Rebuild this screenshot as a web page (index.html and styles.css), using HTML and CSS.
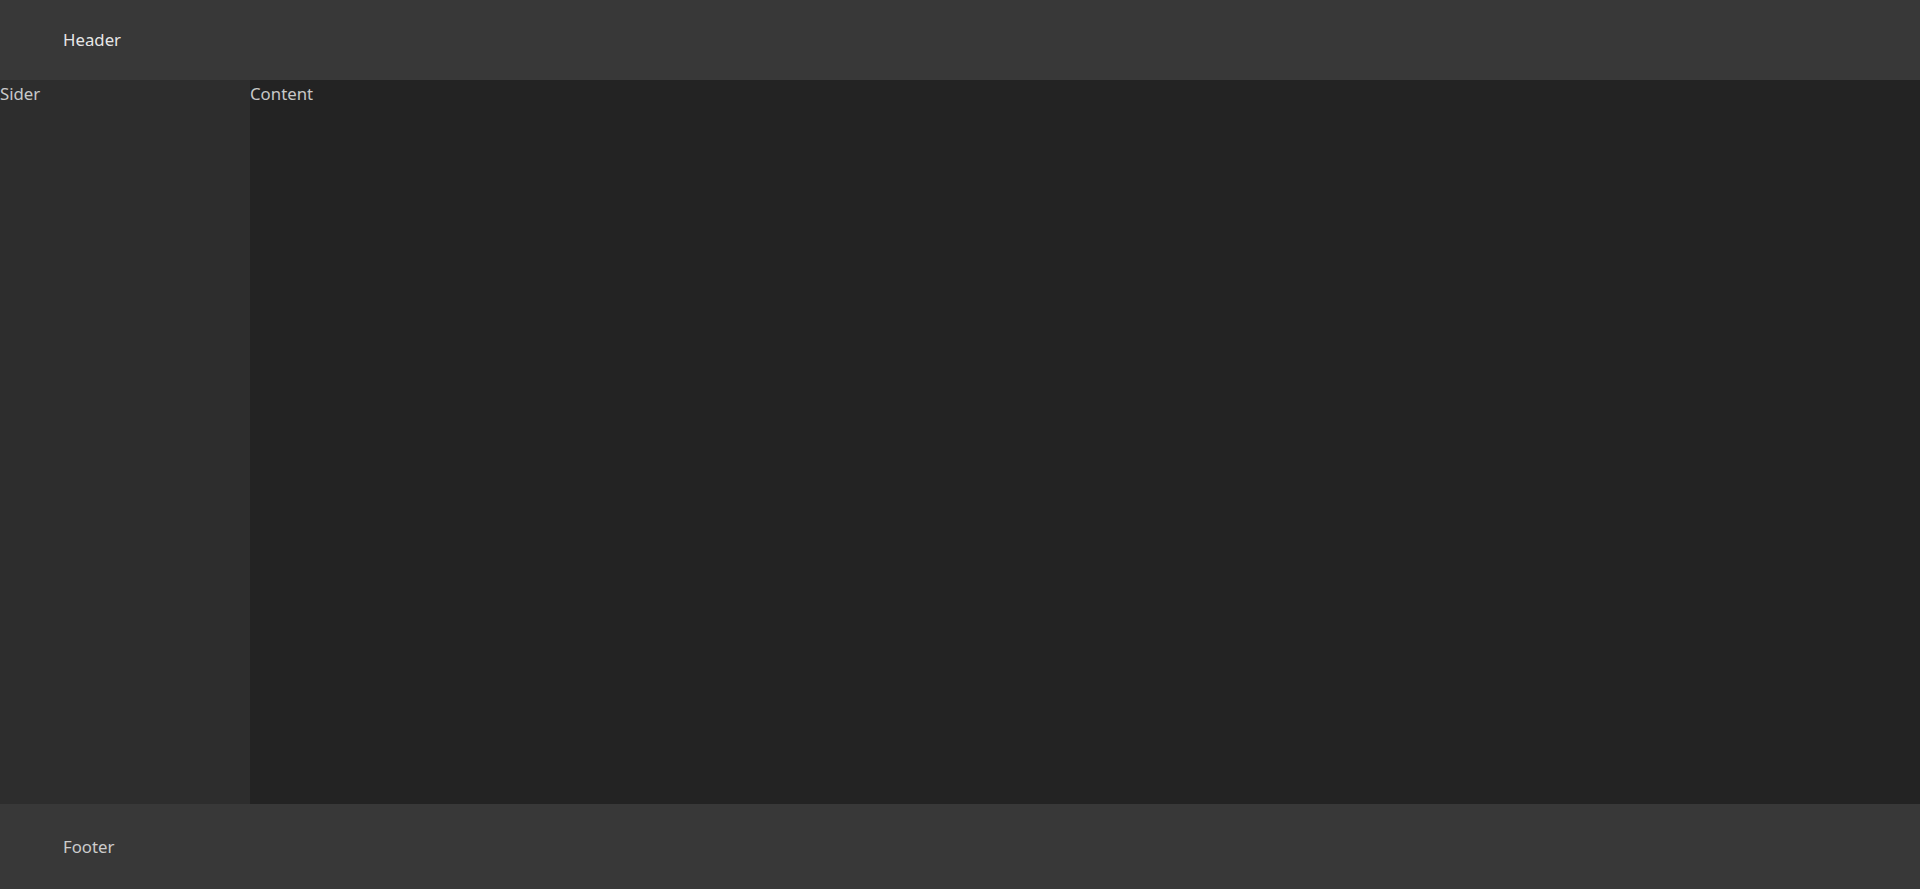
FILE: index.html
```html
<!DOCTYPE html>
<html lang="en">
<head>
<meta charset="UTF-8">
<meta name="viewport" content="width=device-width, initial-scale=1.0">
<title>Layout</title>
<link rel="stylesheet" href="styles.css">
</head>
<body>
<div class="layout">
    <header class="header">Header</header>
    <div class="middle">
        <aside class="sider">Sider</aside>
        <main class="content">Content</main>
    </div>
    <footer class="footer">Footer</footer>
</div>
</body>
</html>
```
FILE: styles.css
```css
html, body {
    margin: 0;
    height: 100%;
}

body {
    background-color: #232323;
    font-family: "Noto Sans", "Open Sans", sans-serif;
    font-size: 16.8px;
    line-height: 27.5px;
    color: rgba(255, 255, 255, 0.75);
}

.layout {
    display: flex;
    flex-direction: column;
    height: 100%;
}

.header {
    height: 80px;
    line-height: 80px;
    padding: 0 63px;
    background-color: #383838;
    color: rgba(255, 255, 255, 0.9);
}

.middle {
    flex: 1;
    display: flex;
    min-height: 0;
}

.sider {
    width: 250px;
    flex-shrink: 0;
    background-color: #2d2d2d;
}

.content {
    flex: 1;
    background-color: #232323;
}

.footer {
    padding: 29px 63px;
    background-color: #383838;
}
```
